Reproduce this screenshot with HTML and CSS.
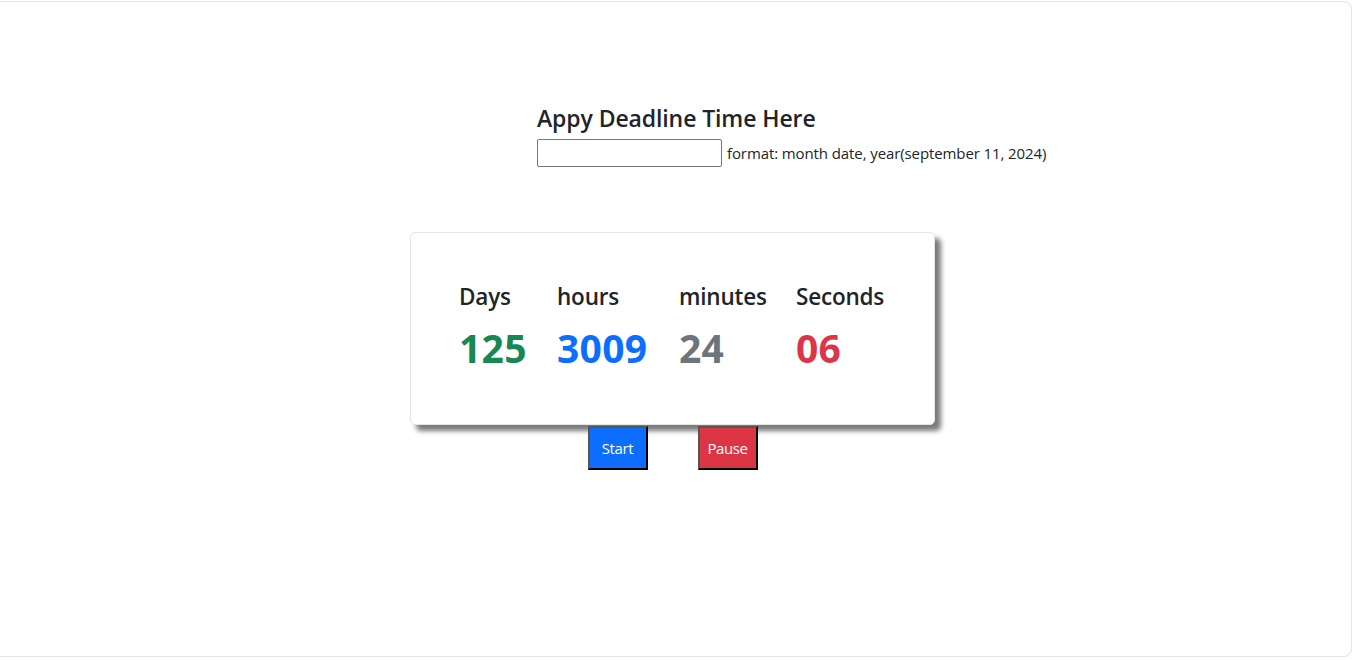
FILE: index.html
```html
<!DOCTYPE html>
<html>
<head>
<meta charset="utf-8">
<link rel="stylesheet" href="styles.css">
</head>
<body>
<div class="frame">
  <div class="deadline">
    <h2 class="title">Appy Deadline Time Here</h2>
    <div class="input-row">
      <input type="text" class="date-input">
      <span class="hint">format: month date, year(september 11, 2024)</span>
    </div>
  </div>
  <div class="timer-wrap">
    <div class="card">
      <div class="unit u-days">
        <div class="label">Days</div>
        <div class="value green">125</div>
      </div>
      <div class="unit u-hours">
        <div class="label">hours</div>
        <div class="value blue">3009</div>
      </div>
      <div class="unit u-min">
        <div class="label">minutes</div>
        <div class="value gray">24</div>
      </div>
      <div class="unit u-sec">
        <div class="label">Seconds</div>
        <div class="value red">06</div>
      </div>
    </div>
    <div class="buttons">
      <button class="btn btn-start">Start</button>
      <button class="btn btn-pause">Pause</button>
    </div>
  </div>
</div>
</body>
</html>
```
FILE: styles.css
```css
html, body {
  margin: 0;
  padding: 0;
  background: #fff;
}
body {
  font-family: "Open Sans", "Noto Sans", sans-serif;
  color: #212529;
}
.frame {
  box-sizing: border-box;
  margin: 1px 0 0 -10px;
  width: 1362px;
  height: 656px;
  border: 1px solid #e4e4e4;
  border-radius: 8px;
  background: #fff;
  padding-top: 100px;
}
.deadline {
  padding-left: 546px;
}
.title {
  margin: 0;
  font-size: 23px;
  font-weight: 600;
  line-height: 32px;
  letter-spacing: -0.1px;
}
.input-row {
  display: flex;
  align-items: center;
  margin-top: 5px;
}
.date-input {
  box-sizing: border-box;
  width: 185px;
  height: 28px;
  margin: 0;
  border: 1px solid #767676;
  border-radius: 2px;
  padding: 1px 2px;
}
.hint {
  margin-left: 5px;
  font-size: 15px;
  color: #212529;
  letter-spacing: -0.1px;
}
.timer-wrap {
  margin-top: 65px;
  padding-left: 419px;
  width: 525px;
  display: flex;
  flex-direction: column;
  align-items: center;
}
.card {
  box-sizing: border-box;
  width: 525px;
  height: 193px;
  background: #fff;
  border: 1px solid #e6e6e6;
  border-radius: 5px;
  box-shadow: 6px 6px 5px #7a7a7a;
  display: flex;
  padding: 49px 0 0 48px;
}
.unit {
  display: flex;
  flex-direction: column;
}
.u-days { width: 98px; }
.u-hours { width: 122px; }
.u-min { width: 117px; }
.u-sec { width: 100px; }
.label {
  font-size: 22.5px;
  font-weight: 600;
  line-height: 30px;
  letter-spacing: -0.2px;
}
.value {
  font-size: 39px;
  font-weight: 700;
  line-height: 50px;
  margin-top: 11px;
  letter-spacing: 0.3px;
}
.green { color: #198754; }
.blue { color: #0d6efd; }
.gray { color: #6c757d; }
.red { color: #dc3545; }
.buttons {
  display: flex;
  gap: 50px;
  margin-top: 1px;
}
.btn {
  box-sizing: border-box;
  width: 60px;
  height: 44px;
  border: 2px outset #3a3a3a;
  border-color: #555 #111 #111 #555;
  color: #fff;
  font-family: "Open Sans", "Noto Sans", sans-serif;
  font-size: 15px;
  padding: 0;
  letter-spacing: -0.4px;
}
.btn-start { background: #0d6efd; }
.btn-pause { background: #dc3545; }
```
